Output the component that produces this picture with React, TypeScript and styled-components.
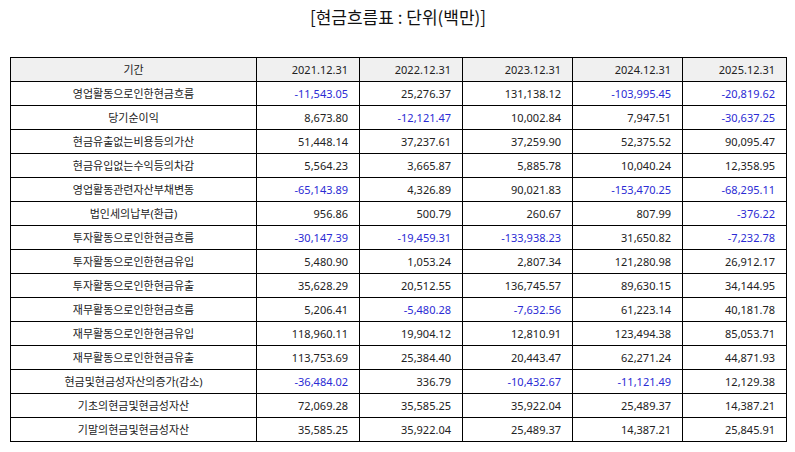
import React from "react";
import styled, { createGlobalStyle } from "styled-components";

type Row = {
  label: string;
  values: number[];
};

const periods = ["2021.12.31", "2022.12.31", "2023.12.31", "2024.12.31", "2025.12.31"];

const colWidths = [246, 103, 103, 110, 110, 104];

const rows: Row[] = [
  { label: "영업활동으로인한현금흐름", values: [-11543.05, 25276.37, 131138.12, -103995.45, -20819.62] },
  { label: "당기순이익", values: [8673.8, -12121.47, 10002.84, 7947.51, -30637.25] },
  { label: "현금유출없는비용등의가산", values: [51448.14, 37237.61, 37259.9, 52375.52, 90095.47] },
  { label: "현금유입없는수익등의차감", values: [5564.23, 3665.87, 5885.78, 10040.24, 12358.95] },
  { label: "영업활동관련자산부채변동", values: [-65143.89, 4326.89, 90021.83, -153470.25, -68295.11] },
  { label: "법인세의납부(환급)", values: [956.86, 500.79, 260.67, 807.99, -376.22] },
  { label: "투자활동으로인한현금흐름", values: [-30147.39, -19459.31, -133938.23, 31650.82, -7232.78] },
  { label: "투자활동으로인한현금유입", values: [5480.9, 1053.24, 2807.34, 121280.98, 26912.17] },
  { label: "투자활동으로인한현금유출", values: [35628.29, 20512.55, 136745.57, 89630.15, 34144.95] },
  { label: "재무활동으로인한현금흐름", values: [5206.41, -5480.28, -7632.56, 61223.14, 40181.78] },
  { label: "재무활동으로인한현금유입", values: [118960.11, 19904.12, 12810.91, 123494.38, 85053.71] },
  { label: "재무활동으로인한현금유출", values: [113753.69, 25384.4, 20443.47, 62271.24, 44871.93] },
  { label: "현금및현금성자산의증가(감소)", values: [-36484.02, 336.79, -10432.67, -11121.49, 12129.38] },
  { label: "기초의현금및현금성자산", values: [72069.28, 35585.25, 35922.04, 25489.37, 14387.21] },
  { label: "기말의현금및현금성자산", values: [35585.25, 35922.04, 25489.37, 14387.21, 25845.91] },
];

const format = (n: number) =>
  n.toLocaleString("en-US", { minimumFractionDigits: 2, maximumFractionDigits: 2 });

const GlobalStyle = createGlobalStyle`
  html, body {
    margin: 0;
    padding: 0;
    background: #ffffff;
  }
  body {
    font-family: "Noto Sans", "Noto Sans CJK KR", sans-serif;
    color: #222222;
  }
`;

export default function App() {
  return (
    <>
      <GlobalStyle />
      <Page>
        <Title>[현금흐름표 : 단위(백만)]</Title>
        <Table>
          <colgroup>
            {colWidths.map((w, i) => (
              <col key={i} style={{ width: w }} />
            ))}
          </colgroup>
          <thead>
            <tr>
              <HeadCell $align="center">기간</HeadCell>
              {periods.map((p) => (
                <HeadCell key={p} $align="right">
                  {p}
                </HeadCell>
              ))}
            </tr>
          </thead>
          <tbody>
            {rows.map((row) => (
              <tr key={row.label}>
                <LabelCell>{row.label}</LabelCell>
                {row.values.map((v, i) => (
                  <ValueCell key={i} $negative={v < 0}>
                    {format(v)}
                  </ValueCell>
                ))}
              </tr>
            ))}
          </tbody>
        </Table>
      </Page>
    </>
  );
}

const Page = styled.div`
  width: 795px;
  height: 452px;
  padding: 0 9px 0 10px;
  box-sizing: border-box;
  display: flex;
  flex-direction: column;
`;

const Title = styled.div`
  height: 57px;
  padding-top: 4px;
  box-sizing: border-box;
  text-align: center;
  font-family: "Noto Sans CJK KR", sans-serif;
  font-size: 17px;
  line-height: 26px;
  color: #111111;
`;

const Table = styled.table`
  width: 776px;
  border-collapse: collapse;
  table-layout: fixed;
  font-size: 11px;

  td,
  th {
    height: 23px;
    border: 1px solid #000000;
    padding: 0 11px;
    white-space: nowrap;
    font-weight: 400;
    line-height: 14px;
  }
`;

const HeadCell = styled.th<{ $align: "center" | "right" }>`
  background: #f0f0f0;
  text-align: ${(p) => p.$align};
  color: #222222;
`;

const LabelCell = styled.td`
  text-align: center;
  color: #222222;
`;

const ValueCell = styled.td<{ $negative: boolean }>`
  text-align: right;
  color: ${(p) => (p.$negative ? "#2b2bd4" : "#222222")};
`;
